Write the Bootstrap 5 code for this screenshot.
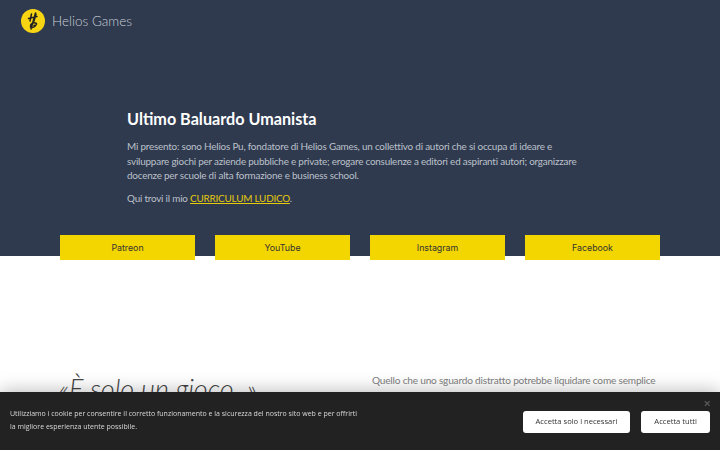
<!DOCTYPE html>
<html lang="it">
<head>
  <meta charset="UTF-8">
  <meta name="viewport" content="width=device-width, initial-scale=1.0">
  <title>Helios Games</title>
  <link href="https://cdn.jsdelivr.net/npm/bootstrap@5.3.0/dist/css/bootstrap.min.css" rel="stylesheet">
  <style>
    body {
      font-family: Lato, "Open Sans", sans-serif;
      background-color: #fff;
      color: #555;
      overflow: hidden;
    }
    .hero {
      background-color: #2f3a4f;
      height: 256px;
    }
    .brand-bar {
      padding: 9px 21px 0;
      height: 100px;
      gap: 7px;
    }
    .brand-name {
      color: #c9ced6;
      font-size: 13.5px;
      font-weight: 300;
      line-height: 24px;
    }
    .intro {
      margin-left: 127px;
      width: 462px;
      height: 135px;
      padding-top: 9px;
    }
    .intro h1 {
      color: #fff;
      font-size: 16.2px;
      font-weight: 700;
      margin-bottom: 11px;
    }
    .intro p {
      color: #bcc1ca;
      font-size: 9.9px;
      letter-spacing: -.2px;
      line-height: 14.5px;
      margin-bottom: 8px;
    }
    .intro a {
      color: #e6ca0c;
    }
    .social-row {
      padding: 0 60px;
      gap: 20px;
    }
    .social-btn {
      flex: 1;
      height: 25px;
      background-color: #f3d500;
      color: #333;
      font-family: Inter, sans-serif;
      font-size: 8.8px;
      font-weight: 400;
      text-decoration: none;
    }
    .claim {
      padding: 117px 60px 0;
      gap: 23px;
    }
    .claim-quote {
      width: 290px;
      margin-left: -1px;
      font-size: 27px;
      font-weight: 300;
      font-style: italic;
      color: #444;
      line-height: 32px;
    }
    .claim-text {
      flex: 1;
      font-size: 10.1px;
      letter-spacing: -.2px;
      line-height: 14.6px;
      color: #808080;
    }
    .cookie-bar {
      height: 58px;
      background-color: #222;
      box-shadow: 0 0 18px rgba(0, 0, 0, .3);
      padding: 0 10px;
      font-family: "Open Sans", sans-serif;
    }
    .cookie-text {
      color: #d8d8d8;
      font-size: 7px;
      line-height: 12.6px;
    }
    .cookie-btn {
      height: 22px;
      padding: 0 13px;
      background: #fff;
      color: #333;
      font-size: 7.6px;
      border: 0;
      border-radius: 3px;
      margin-top: 1px;
    }
    .cookie-gap {
      gap: 11px;
    }
    .cookie-close {
      top: 5px;
      right: 9px;
      color: #555;
      font-size: 13px;
      line-height: 13px;
      font-weight: 700;
    }
  </style>
</head>
<body>
  <div class="hero">
    <div class="brand-bar d-flex align-items-start">
      <svg width="24" height="24" viewBox="0 0 24 24">
        <circle cx="12" cy="12" r="12" fill="#f8d513"/>
        <path d="M10.5 5 L9 12 M15 5 L13 12 M7.5 9.5 L16 7.5 M14.5 4 L10 20 M15.5 14.5 C12 12.5 9 15 9.5 18 C12 19 14 18 15 16 L13 16.5" stroke="#222" stroke-width="1.5" fill="none" stroke-linecap="round"/>
      </svg>
      <span class="brand-name">Helios Games</span>
    </div>
    <div class="intro">
      <h1>Ultimo Baluardo Umanista</h1>
      <p>Mi presento: sono Helios Pu, fondatore di Helios Games, un collettivo di autori che si occupa di ideare e sviluppare giochi per aziende pubbliche e private; erogare consulenze a editori ed aspiranti autori; organizzare docenze per scuole di alta formazione e business school.</p>
      <p>Qui trovi il mio <a href="#">CURRICULUM LUDICO</a>.</p>
    </div>
    <div class="social-row d-flex">
      <a class="social-btn d-flex align-items-center justify-content-center" href="#">Patreon</a>
      <a class="social-btn d-flex align-items-center justify-content-center" href="#">YouTube</a>
      <a class="social-btn d-flex align-items-center justify-content-center" href="#">Instagram</a>
      <a class="social-btn d-flex align-items-center justify-content-center" href="#">Facebook</a>
    </div>
  </div>

  <div class="claim d-flex">
    <div class="claim-quote">«È solo un gioco. »</div>
    <div class="claim-text">Quello che uno sguardo distratto potrebbe liquidare come semplice passatempo è in realtà un potente strumento di apprendimento.</div>
  </div>

  <div class="cookie-bar position-fixed bottom-0 start-0 end-0 d-flex align-items-center justify-content-between">
    <div class="cookie-text">Utilizziamo i cookie per consentire il corretto funzionamento e la sicurezza del nostro sito web e per offrirti<br>la migliore esperienza utente possibile.</div>
    <div class="cookie-gap d-flex">
      <button class="cookie-btn" type="button">Accetta solo i necessari</button>
      <button class="cookie-btn" type="button">Accetta tutti</button>
    </div>
    <span class="cookie-close position-absolute">×</span>
  </div>

  <script src="https://cdn.jsdelivr.net/npm/bootstrap@5.3.0/dist/js/bootstrap.bundle.min.js"></script>
</body>
</html>
